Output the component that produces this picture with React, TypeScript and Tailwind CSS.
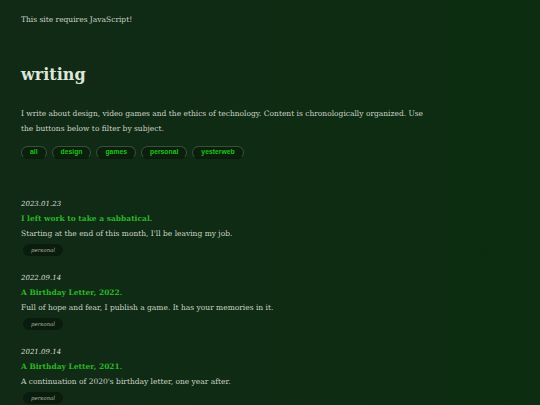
import React from "react";

const serif = { fontFamily: '"DejaVu Serif", "Liberation Serif", serif' };

const filters = ["all", "design", "games", "personal", "yesterweb"];

const posts = [
  {
    date: "2023.01.23",
    title: "I left work to take a sabbatical.",
    desc: "Starting at the end of this month, I'll be leaving my job.",
    tag: "personal",
  },
  {
    date: "2022.09.14",
    title: "A Birthday Letter, 2022.",
    desc: "Full of hope and fear, I publish a game. It has your memories in it.",
    tag: "personal",
  },
  {
    date: "2021.09.14",
    title: "A Birthday Letter, 2021.",
    desc: "A continuation of 2020's birthday letter, one year after.",
    tag: "personal",
  },
];

export default function App() {
  return (
    <div
      className="w-[540px] h-[405px] overflow-hidden bg-gradient-to-r from-[#112a16] to-[#0c2d10] text-[#cbd3c6]"
      style={serif}
    >
      <div className="pl-[21px] pt-[14px]">
        <p className="text-[7.5px] leading-[12px]">This site requires JavaScript!</p>
        <h1 className="mt-[39px] text-[16px] leading-[20px] font-bold text-[#dde6d8]">writing</h1>
        <p className="mt-[21px] w-[430px] text-[7.5px] leading-[15px]">
          I write about design, video games and the ethics of technology. Content is chronologically organized. Use
          <br />
          the buttons below to filter by subject.
        </p>
        <div className="mt-[10px] flex gap-[5px]">
          {filters.map((f) => (
            <button
              key={f}
              className="h-[13px] px-[8px] rounded-full bg-[#0a1f0c] border border-[#3a4f3b] border-b-[#0a1a0b] text-[#20c21c] text-[6.8px] font-bold leading-none"
              style={{ fontFamily: '"Liberation Sans", Arial, sans-serif' }}
            >
              {f}
            </button>
          ))}
        </div>
        <div className="mt-[39px] flex flex-col gap-[16px]">
          {posts.map((p) => (
            <div key={p.date} className="flex flex-col">
              <div className="text-[7px] leading-[13px] italic text-[#d6ddd2]">{p.date}</div>
              <div className="text-[7.5px] leading-[15px] font-bold text-[#2bb526]">{p.title}</div>
              <div className="text-[7.5px] leading-[15px]">{p.desc}</div>
              <div className="mt-[3px] ml-[2px] w-[40px] h-[12px] rounded-full bg-[#0a1d0c] flex items-center justify-center text-[5.5px] italic text-[#a9b3a6]">
                {p.tag}
              </div>
            </div>
          ))}
        </div>
      </div>
    </div>
  );
}
